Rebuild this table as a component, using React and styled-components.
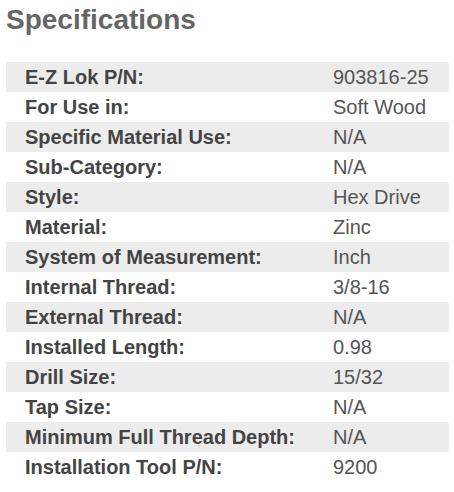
import React from "react";
import styled, { createGlobalStyle } from "styled-components";

const specs = [
  ["E-Z Lok P/N:", "903816-25"],
  ["For Use in:", "Soft Wood"],
  ["Specific Material Use:", "N/A"],
  ["Sub-Category:", "N/A"],
  ["Style:", "Hex Drive"],
  ["Material:", "Zinc"],
  ["System of Measurement:", "Inch"],
  ["Internal Thread:", "3/8-16"],
  ["External Thread:", "N/A"],
  ["Installed Length:", "0.98"],
  ["Drill Size:", "15/32"],
  ["Tap Size:", "N/A"],
  ["Minimum Full Thread Depth:", "N/A"],
  ["Installation Tool P/N:", "9200"],
];

const GlobalStyle = createGlobalStyle`
  body {
    margin: 0;
    background: #fff;
    font-family: "Liberation Sans", Arial, sans-serif;
  }
`;

const Wrapper = styled.div`
  padding: 6px 5px 0 6px;
`;

const Title = styled.h2`
  margin: 0 0 28px 0;
  font-size: 28px;
  line-height: 28px;
  font-weight: bold;
  color: #666;
`;

const Table = styled.div`
  display: flex;
  flex-direction: column;
  width: 443px;
`;

const Row = styled.div`
  display: grid;
  grid-template-columns: 308px 1fr;
  height: 30px;
  align-items: center;
  padding-left: 19px;
  background: ${(p) => (p.$striped ? "#ececec" : "transparent")};
  font-size: 20px;
  color: #444;
`;

const Label = styled.span`
  font-weight: bold;
`;

const Value = styled.span`
  color: #555;
`;

export default function App() {
  return (
    <>
      <GlobalStyle />
      <Wrapper>
        <Title>Specifications</Title>
        <Table>
          {specs.map(([label, value], i) => (
            <Row key={label} $striped={i % 2 === 0}>
              <Label>{label}</Label>
              <Value>{value}</Value>
            </Row>
          ))}
        </Table>
      </Wrapper>
    </>
  );
}
